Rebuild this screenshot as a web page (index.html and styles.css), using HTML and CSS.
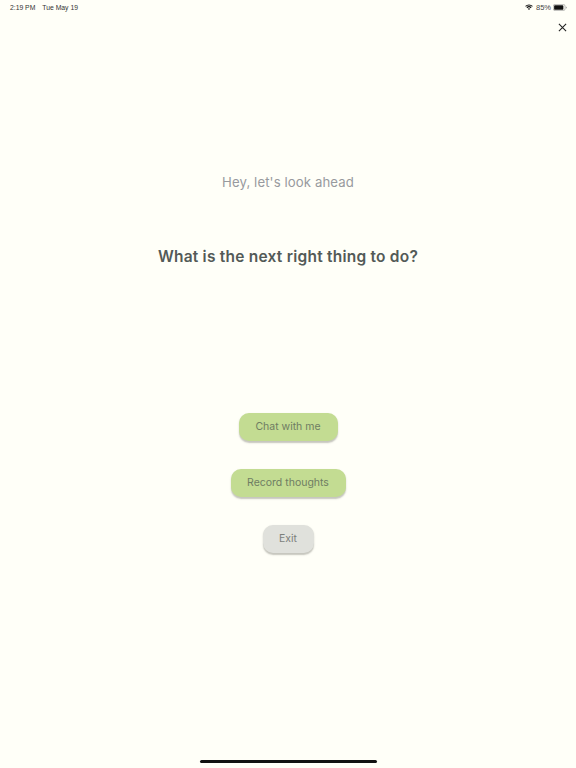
FILE: index.html
```html
<!DOCTYPE html>
<html lang="en">
<head>
<meta charset="utf-8">
<title>Look ahead</title>
<link rel="stylesheet" href="styles.css">
</head>
<body>
<div class="screen">
  <header class="status">
    <div class="status-left"><span>2:19 PM</span><span>Tue May 19</span></div>
    <div class="status-right">
      <svg class="wifi" viewBox="0 0 16 12" aria-hidden="true"><path d="M8 11.5 5.6 8.9a3.5 3.5 0 0 1 4.8 0zM4.500 7.800 3 6.200a7 7 0 0 1 10 0l-1.500 1.600a4.900 4.900 0 0 0-7 0zM1.900 5.100.4 3.500a10.700 10.700 0 0 1 15.200 0l-1.500 1.600a8.500 8.500 0 0 0-12.200 0z"/></svg>
      <span>85%</span>
      <svg class="battery" viewBox="0 0 25 12" aria-hidden="true"><rect x=".5" y=".5" width="21" height="11" rx="3" fill="none" stroke="#8a8a8a"/><rect x="2" y="2" width="16.500" height="8" rx="1.500" fill="#111"/><path d="M23 4v4c.9-.3 1.500-1.100 1.500-2s-.6-1.700-1.500-2z" fill="#8a8a8a"/></svg>
    </div>
  </header>
  <div class="close-row">
    <svg class="close" viewBox="0 0 10 10" aria-hidden="true"><path d="M1 1l8 8M9 1l-8 8"/></svg>
  </div>
  <main class="content">
    <p class="hello">Hey, let's look ahead</p>
    <h1 class="question">What is the next right thing to do?</h1>
    <div class="actions">
      <button class="btn btn-green btn-chat">Chat with me</button>
      <button class="btn btn-green btn-record">Record thoughts</button>
      <button class="btn btn-grey btn-exit">Exit</button>
    </div>
  </main>
  <div class="home-bar"></div>
</div>
</body>
</html>
```
FILE: styles.css
```css
* { box-sizing: border-box; }
html, body { margin: 0; padding: 0; }
body { background: #fffff8; font-family: "Inter", "Open Sans", "Liberation Sans", sans-serif; }
.screen { width: 576px; height: 768px; display: flex; flex-direction: column; overflow: hidden; }
.status { height: 14px; padding: 0 9px 0 10px; display: flex; justify-content: space-between; align-items: center; font-family: "Liberation Sans", sans-serif; font-size: 6.800px; color: #333; flex: none; }
.status-left { display: flex; gap: 7px; }
.status-right { display: flex; align-items: center; gap: 2px; color: #444; font-size: 7.500px; }
.wifi { width: 8px; height: 6.500px; fill: #111; margin-right: 1px; }
.battery { width: 14px; height: 7px; }
.close-row { display: flex; justify-content: flex-end; padding: 9px 9.500px 0 0; flex: none; }
.close { width: 9px; height: 9px; stroke: #222; stroke-width: 1.200; fill: none; display: block; }
.content { display: flex; flex-direction: column; align-items: center; flex: none; padding-top: 141px; }
.hello { margin: 0; height: 18px; line-height: 18px; font-size: 13.200px; font-weight: 400; color: #989a9e; letter-spacing: .1px; }
.question { margin: 56px 0 0; height: 20px; line-height: 20px; font-size: 15.500px; font-weight: 600; color: #535a57; letter-spacing: .23px; }
.actions { margin-top: 146px; display: flex; flex-direction: column; align-items: center; gap: 28px; }
.btn { height: 28px; border: 0; border-radius: 10px; padding: 0 0 1px; font: inherit; font-size: 10.500px; color: #6f7d63; box-shadow: 0 1.500px 1.500px rgba(90, 90, 80, .35); display: block; }
.btn-green { background: #c3dc92; }
.btn-grey { background: #e0e1dc; color: #7c7f7b; }
.btn-chat { width: 99px; }
.btn-record { width: 115px; }
.btn-exit { width: 51px; }
.home-bar { position: absolute; left: 200px; top: 760px; width: 177px; height: 3px; border-radius: 2px; background: #111; }
```
